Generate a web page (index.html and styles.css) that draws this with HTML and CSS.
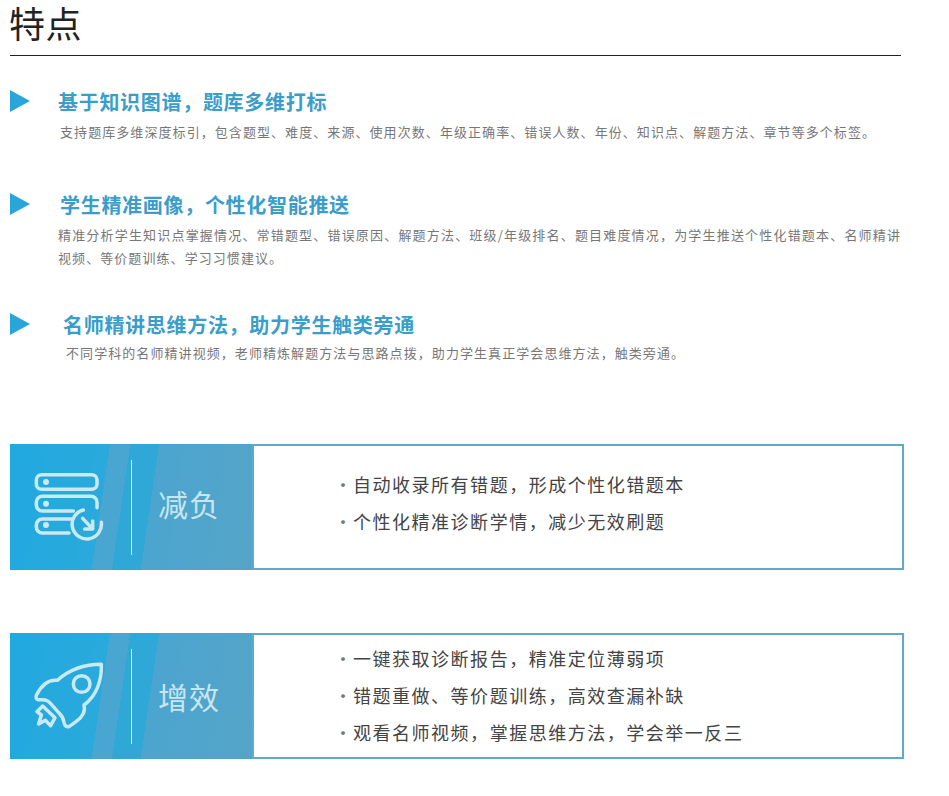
FILE: index.html
```html
<!DOCTYPE html>
<html lang="zh-CN">
<head>
<meta charset="utf-8">
<title>特点</title>
<link rel="stylesheet" href="styles.css">
</head>
<body>
<main class="page">
  <h1 class="heading">特点</h1>

  <section class="feature feature-a">
    <div class="feature-head"><i class="arrow"></i><h2 class="feature-title">基于知识图谱，题库多维打标</h2></div>
    <p class="feature-desc">支持题库多维深度标引，包含题型、难度、来源、使用次数、年级正确率、错误人数、年份、知识点、解题方法、章节等多个标签。</p>
  </section>

  <section class="feature feature-b">
    <div class="feature-head"><i class="arrow"></i><h2 class="feature-title">学生精准画像，个性化智能推送</h2></div>
    <p class="feature-desc">精准分析学生知识点掌握情况、常错题型、错误原因、解题方法、班级/年级排名、题目难度情况，为学生推送个性化错题本、名师精讲视频、等价题训练、学习习惯建议。</p>
  </section>

  <section class="feature feature-c">
    <div class="feature-head"><i class="arrow"></i><h2 class="feature-title">名师精讲思维方法，助力学生触类旁通</h2></div>
    <p class="feature-desc">不同学科的名师精讲视频，老师精炼解题方法与思路点拨，助力学生真正学会思维方法，触类旁通。</p>
  </section>

  <section class="card card-first">
    <div class="card-side">
      <svg class="card-icon" viewBox="30 27 363 378" aria-hidden="true">
        <g fill="none" stroke="#c9e9f3" stroke-width="10.5" stroke-linecap="round" stroke-linejoin="round">
          <rect x="109" y="119" width="182" height="44" rx="16"/>
          <path d="M220 228H127a18 18 0 0 1-18-18v-8a18 18 0 0 1 18-18h146a18 18 0 0 1 18 18v16"/>
          <path d="M216 252H127a18 18 0 0 0-18 18v6a18 18 0 0 0 18 18h80"/>
          <path d="M304 262A44 44 0 1 1 250 225"/>
          <path d="M248 250L276 280"/>
          <path d="M278 258V282H254"/>
        </g>
        <g fill="#c9e9f3">
          <circle cx="138" cy="141" r="9"/>
          <circle cx="138" cy="206" r="9"/>
          <circle cx="138" cy="270" r="9"/>
        </g>
      </svg>
      <span class="card-rule"></span>
      <span class="card-label card-label-raised">减负</span>
    </div>
    <ul class="card-list card-list-short">
      <li class="card-item"><span class="dot">·</span>自动收录所有错题，形成个性化错题本</li>
      <li class="card-item"><span class="dot">·</span>个性化精准诊断学情，减少无效刷题</li>
    </ul>
  </section>

  <section class="card card-second">
    <div class="card-side">
      <svg class="card-icon" viewBox="30 24 363 378" aria-hidden="true">
        <g fill="none" stroke="#c9e9f3" stroke-width="10.5" stroke-linecap="round" stroke-linejoin="round">
          <path d="M304 118C306 165 290 212 252 240C258 262 245 278 228 290L208 304C200 308 194 302 192 292C190 280 186 272 178 265L152 236C146 228 140 224 128 224L116 224C108 224 106 216 110 209C122 186 142 162 172 166C206 136 250 118 304 118Z"/>
          <circle cx="245" cy="177" r="25"/>
          <path d="M128 243L165 278L152 302L136 286L116 297L124 270L111 260Z"/>
        </g>
      </svg>
      <span class="card-rule"></span>
      <span class="card-label">增效</span>
    </div>
    <ul class="card-list">
      <li class="card-item"><span class="dot">·</span>一键获取诊断报告，精准定位薄弱项</li>
      <li class="card-item"><span class="dot">·</span>错题重做、等价题训练，高效查漏补缺</li>
      <li class="card-item"><span class="dot">·</span>观看名师视频，掌握思维方法，学会举一反三</li>
    </ul>
  </section>
</main>
</body>
</html>
```

FILE: styles.css
```css
* { box-sizing: border-box; }

html, body { margin: 0; padding: 0; background: #fff; }

body {
  font-family: "Noto Sans CJK SC", "Noto Sans", sans-serif;
  color: #333;
  overflow: hidden;
}

.page {
  width: 949px;
  height: 796px;
  padding-left: 10px;
}

.heading {
  width: 891px;
  height: 56px;
  margin: 0;
  border-bottom: 1px solid #222;
  font-size: 36px;
  font-weight: 400;
  letter-spacing: 0.5px;
  text-indent: -1px;
  line-height: 44px;
  color: #222;
}

.feature-head {
  display: flex;
  align-items: center;
  height: 26px;
}

.arrow {
  flex: none;
  width: 0;
  height: 0;
  margin-top: -3px;
  border-left: 20px solid #2aa5da;
  border-top: 11.5px solid transparent;
  border-bottom: 11.5px solid transparent;
}

.feature-title {
  margin: 0;
  font-size: 20px;
  font-weight: 700;
  letter-spacing: 0.7px;
  line-height: 26px;
  color: #3b9dc9;
}

.feature-desc {
  margin: 5px 0 0;
  font-size: 13px;
  letter-spacing: 1.07px;
  line-height: 23px;
  color: #777;
}

.feature-a { margin-top: 33px; }
.feature-a .feature-title { margin-left: 28px; }
.feature-a .feature-desc { margin-left: 50px; }

.feature-b { margin-top: 49px; }
.feature-b .feature-title { margin-left: 30px; }
.feature-b .feature-desc { margin-left: 48px; width: 843px; text-align: justify; }

.feature-c { margin-top: 43px; }
.feature-c .feature-title { margin-left: 33px; }
.feature-c .feature-desc { margin: 3px 0 0 56px; }

.card {
  display: flex;
  width: 894px;
  height: 126px;
}

.card-first { margin-top: 80px; }
.card-second { margin-top: 63px; }

.card-side {
  flex: none;
  display: flex;
  align-items: center;
  width: 242px;
  background: linear-gradient(98.3deg,
    #21a9df 0, #2aa9dc 99px,
    #48a6d1 99px, #48a6d1 119px,
    #30a8d7 119px, #30a8d7 147.5px,
    #4ba5cf 147.5px, #55a4c8 100%);
}

.card-icon {
  flex: none;
  width: 121px;
  height: 126px;
}

.card-rule {
  flex: none;
  width: 1px;
  height: 95px;
  background: #d6eef6;
}

.card-label {
  margin-left: 26px;
  font-size: 30px;
  letter-spacing: 1px;
  line-height: 40px;
  color: #c9e6f0;
}

.card-label-raised { margin-bottom: 8px; }

.card-list {
  flex: 1;
  margin: 0;
  padding: 0 0 2px 80px;
  list-style: none;
  border: 2px solid #5fa9cb;
  display: flex;
  flex-direction: column;
  justify-content: center;
}

.card-list-short { padding-bottom: 9px; }

.card-item {
  display: flex;
  font-size: 18px;
  letter-spacing: 1.52px;
  line-height: 37px;
  color: #444;
}

.dot {
  flex: none;
  width: 19px;
  letter-spacing: 0;
  color: #777;
}
```
